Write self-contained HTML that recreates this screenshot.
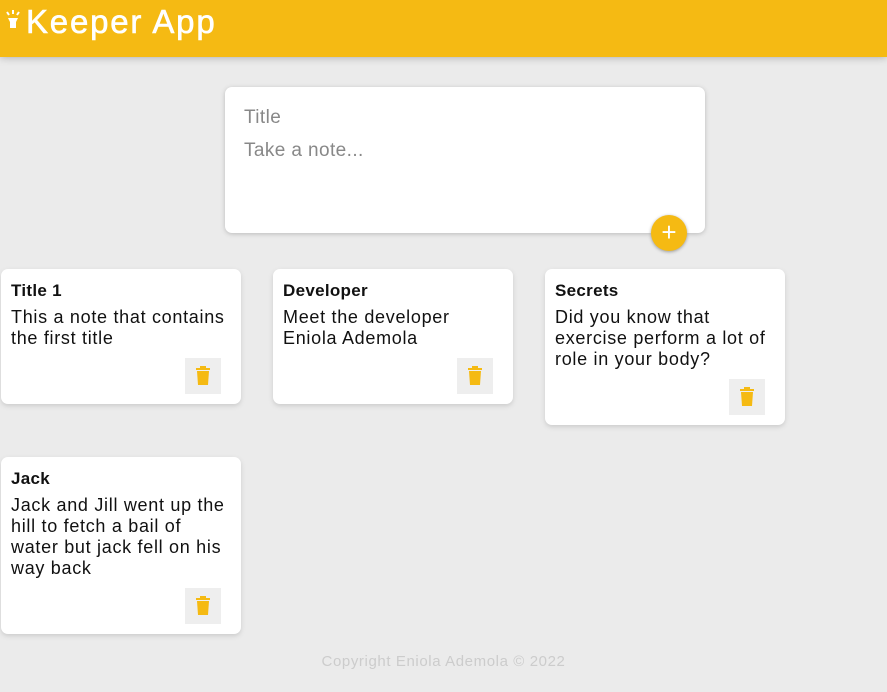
<!DOCTYPE html>
<html><head><style>
body{margin:0;width:887px;height:692px;background:#ebebeb;font-family:"Liberation Sans",sans-serif;position:relative;overflow:hidden}
header{position:absolute;left:0;top:0;width:887px;height:57px;background:#f5ba13;box-shadow:0 0 8px rgba(0,0,0,.3)}
header h1{margin:0;position:absolute;left:26px;top:3px;color:#fff;font-size:33px;font-weight:400;letter-spacing:1.8px;-webkit-text-stroke:.6px #fff}
.form{position:absolute;left:225px;top:87px;width:480px;height:146px;background:#fff;border-radius:7px;box-shadow:0 1px 5px #bbb}
.form div{position:absolute;left:19px;color:#888;font-size:19px;letter-spacing:.4px}
.add{position:absolute;left:651px;top:215px;width:36px;height:36px;border-radius:50%;background:#f5ba13;color:#fff;font-size:26px;text-align:center;line-height:35px;box-shadow:0 1px 3px #999}
.note{position:absolute;width:240px;background:#fff;border-radius:7px;box-shadow:0 2px 5px #ccc;padding:12px 10px 10px;box-sizing:border-box}
.note h2{margin:0 0 6px;font-size:17px;font-weight:700;color:#111;letter-spacing:.3px}
.note p{margin:0;font-size:18px;line-height:21px;color:#111;letter-spacing:.7px}
.del{position:absolute;right:20px;bottom:10px;width:36px;height:36px;background:#eee}
.del svg{position:absolute;left:10px;top:8px}
footer{position:absolute;top:653px;width:100%;text-align:center;color:#ccc;font-size:15px;letter-spacing:.6px}
</style></head><body>
<header>
<svg style="position:absolute;left:4px;top:8px" width="18" height="22" viewBox="0 0 18 22"><path d="M4 10h10l-2 4v6H6v-6z" fill="#fff"/><path d="M9 2v4M3 4l2 3M15 4l-2 3" stroke="#fff" stroke-width="2"/></svg>
<h1>Keeper App</h1></header>
<div class="form"><div style="top:20px">Title</div><div style="top:53px">Take a note...</div></div>
<div class="add">+</div>
<div class="note" style="left:1px;top:269px;height:135px"><h2>Title 1</h2><p>This a note that contains the first title</p><div class="del"><svg width="16" height="20" viewBox="0 0 16 20"><rect x="1" y="2" width="14" height="2" fill="#f5ba13"/><rect x="5" y="0" width="6" height="2" fill="#f5ba13"/><path d="M2 5h12l-1 14H3z" fill="#f5ba13"/></svg></div></div>
<div class="note" style="left:273px;top:269px;height:135px"><h2>Developer</h2><p>Meet the developer Eniola Ademola</p><div class="del"><svg width="16" height="20" viewBox="0 0 16 20"><rect x="1" y="2" width="14" height="2" fill="#f5ba13"/><rect x="5" y="0" width="6" height="2" fill="#f5ba13"/><path d="M2 5h12l-1 14H3z" fill="#f5ba13"/></svg></div></div>
<div class="note" style="left:545px;top:269px;height:156px"><h2>Secrets</h2><p>Did you know that exercise perform a lot of role in your body?</p><div class="del"><svg width="16" height="20" viewBox="0 0 16 20"><rect x="1" y="2" width="14" height="2" fill="#f5ba13"/><rect x="5" y="0" width="6" height="2" fill="#f5ba13"/><path d="M2 5h12l-1 14H3z" fill="#f5ba13"/></svg></div></div>
<div class="note" style="left:1px;top:457px;height:177px"><h2>Jack</h2><p>Jack and Jill went up the hill to fetch a bail of water but jack fell on his way back</p><div class="del"><svg width="16" height="20" viewBox="0 0 16 20"><rect x="1" y="2" width="14" height="2" fill="#f5ba13"/><rect x="5" y="0" width="6" height="2" fill="#f5ba13"/><path d="M2 5h12l-1 14H3z" fill="#f5ba13"/></svg></div></div>
<footer>Copyright Eniola Ademola © 2022</footer>
</body></html>
